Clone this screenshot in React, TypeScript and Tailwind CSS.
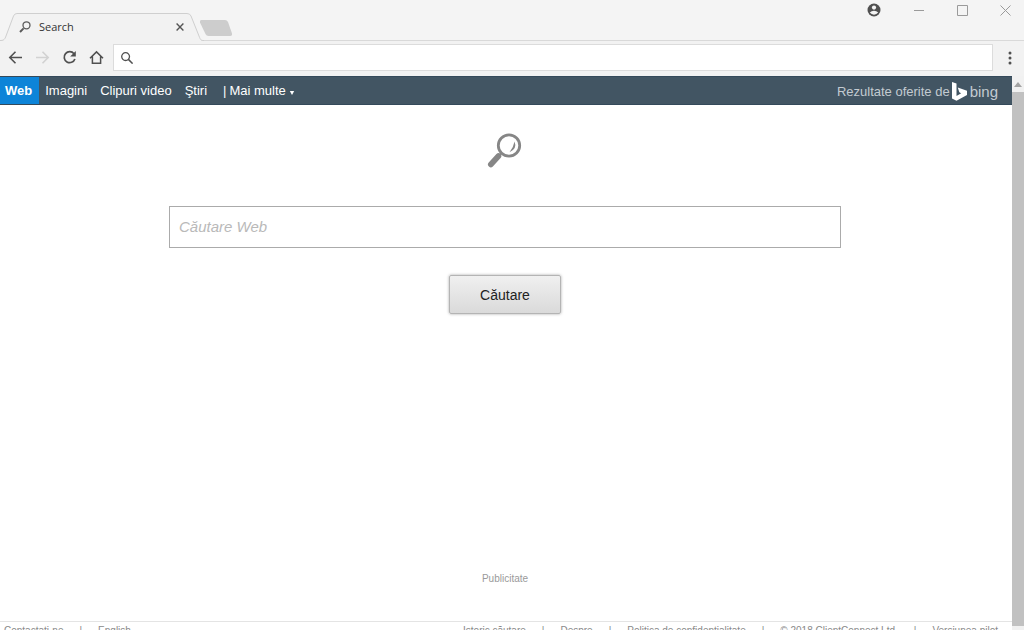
import { useState } from "react";

const NAV_LINKS = ["Imagini", "Clipuri video", "Ştiri"];

const FOOTER_LEFT = ["Contactaţi-ne", "English"];
const FOOTER_RIGHT = [
  "Istoric căutare",
  "Despre",
  "Politica de confidenţialitate",
  "© 2018 ClientConnect Ltd.",
  "Versiunea pilot",
];

function TitleBar() {
  return (
    <header className="flex h-10 shrink-0 items-end justify-between bg-[#f4f4f4]">
      <div className="flex items-end">
        <div className="relative z-10 -mb-px flex h-7 w-[204px] items-center pr-5 pl-[19px]">
          <svg
            viewBox="0 0 204 28"
            className="absolute inset-0 h-full w-full"
            aria-hidden="true"
          >
            <path d="M0 28C4 28 5 26 6 23L13.500 3Q14.500 .5 17 .5H187Q190 .5 191 3L199 23C200.500 27 201 28 204 28Z" fill="#f2f2f2" />
            <path
              d="M0 27.500C4 27.500 5 26 6 23L13.500 3Q14.500 .5 17 .5H187Q190 .5 191 3L199 23C200.500 27 201 27.500 204 27.500"
              fill="none"
              stroke="#cfcfcf"
            />
          </svg>
          <svg viewBox="0 0 12 12" className="relative h-3 w-3" fill="none" stroke="#5a5a5a" aria-hidden="true">
            <circle cx="7.500" cy="4.300" r="3.500" strokeWidth="1.300" />
            <path d="M4.600 7.400 1 11" strokeWidth="2" />
          </svg>
          <span className="relative ml-2 flex-1 font-['Open_Sans',sans-serif] text-[11px] text-[#333]">
            Search
          </span>
          <button type="button" aria-label="Close tab" className="relative">
            <svg viewBox="0 0 8 8" className="h-2 w-2" stroke="#555" strokeWidth="1.400" aria-hidden="true">
              <path d="M.6.6 7.400 7.400M7.400.6.6 7.400" />
            </svg>
          </button>
        </div>
        <button type="button" aria-label="New tab" className="-ml-1 pb-1">
          <svg viewBox="0 0 32 16" className="h-4 w-8" fill="#cdcdcd" aria-hidden="true">
            <path d="M1.500 0H25Q27 0 28 2L32 13.500Q32.500 16 30 16H8.500Q6.500 16 5.500 14L0 2.500Q-.5 0 1.500 0Z" />
          </svg>
        </button>
      </div>
      <div className="flex items-center self-start pr-[13px]">
        <button type="button" aria-label="Profile" className="mt-[3px] mr-[33px]">
          <svg viewBox="0 0 14 14" className="h-3.5 w-3.5" aria-hidden="true">
            <circle cx="7" cy="7" r="6.500" fill="#505050" />
            <circle cx="7" cy="4.600" r="2.100" fill="#f4f4f4" />
            <path d="M2.800 9.600Q4.500 7.700 7 7.700T11.200 9.600Q9.500 11.700 7 11.700T2.800 9.600Z" fill="#f4f4f4" />
          </svg>
        </button>
        <div className="mt-1 flex items-center gap-8 text-[#9a9a9a]">
          <button type="button" aria-label="Minimize">
            <svg viewBox="0 0 11 11" className="h-[11px] w-[11px]" stroke="currentColor" aria-hidden="true">
              <path d="M0 5.500H10" />
            </svg>
          </button>
          <button type="button" aria-label="Maximize">
            <svg viewBox="0 0 11 11" className="h-[11px] w-[11px]" stroke="currentColor" fill="none" aria-hidden="true">
              <path d="M.5.5H10.500V10.500H.5Z" />
            </svg>
          </button>
          <button type="button" aria-label="Close">
            <svg viewBox="0 0 11 11" className="h-[11px] w-[11px]" stroke="currentColor" aria-hidden="true">
              <path d="M.5.5 10.500 10.500M10.500.5.5 10.500" />
            </svg>
          </button>
        </div>
      </div>
    </header>
  );
}

function Toolbar() {
  const [address, setAddress] = useState("");

  return (
    <div className="flex h-9 shrink-0 items-center border-t border-[#d9d9d9] bg-[#f2f2f2] pr-3 pb-0.5 pl-2">
      <div className="flex items-center gap-3 text-[#505050]">
        <button type="button" aria-label="Back">
          <svg viewBox="0 0 15 15" className="h-[15px] w-[15px]" fill="none" stroke="currentColor" strokeWidth="1.600" aria-hidden="true">
            <path d="M14 7.500H2M7.500 1.800 1.800 7.500 7.500 13.200" />
          </svg>
        </button>
        <button type="button" aria-label="Forward" className="text-[#d2d2d2]">
          <svg viewBox="0 0 15 15" className="h-[15px] w-[15px]" fill="none" stroke="currentColor" strokeWidth="1.600" aria-hidden="true">
            <path d="M1 7.500H13M7.500 1.800 13.200 7.500 7.500 13.200" />
          </svg>
        </button>
        <button type="button" aria-label="Reload">
          <svg viewBox="0 0 15 15" className="h-[15px] w-[15px]" aria-hidden="true">
            <path
              d="M12 3.700A5.500 5.500 0 1 0 12.900 9"
              fill="none"
              stroke="currentColor"
              strokeWidth="1.700"
            />
            <path d="M13.800 1V6.600H8.200Z" fill="currentColor" />
          </svg>
        </button>
        <button type="button" aria-label="Home">
          <svg viewBox="0 0 15 15" className="h-[15px] w-[15px]" fill="none" stroke="currentColor" strokeWidth="1.500" aria-hidden="true">
            <path d="M1 8.300 7.500 1.900 14 8.300M3.400 6.500V13.200H11.600V6.500" />
          </svg>
        </button>
      </div>
      <label className="ml-[9px] flex h-[27px] flex-1 items-center border border-[#dcdcdc] bg-white pl-[7px]">
        <svg viewBox="0 0 12 12" className="h-3 w-3" fill="none" stroke="#505050" aria-hidden="true">
          <circle cx="4.600" cy="4.600" r="3.900" strokeWidth="1.300" />
          <path d="M7.400 7.400 11.600 11.600" strokeWidth="1.500" />
        </svg>
        <input
          type="text"
          aria-label="Address"
          value={address}
          onChange={(e) => setAddress(e.target.value)}
          className="ml-2 h-full min-w-0 flex-1 bg-transparent text-[13px] outline-none"
        />
      </label>
      <button type="button" aria-label="Menu" className="ml-[15px]">
        <svg viewBox="0 0 4 14" className="h-3.5 w-1" fill="#505050" aria-hidden="true">
          <circle cx="2" cy="2" r="1.500" />
          <circle cx="2" cy="7" r="1.500" />
          <circle cx="2" cy="12" r="1.500" />
        </svg>
      </button>
    </div>
  );
}

function NavBar() {
  return (
    <nav className="flex h-[29px] shrink-0 items-stretch justify-between border-y border-[#34495a] bg-[#425563] text-[13px] text-white">
      <div className="flex items-center">
        <a href="#web" className="mr-1.5 flex items-center self-stretch bg-[#0d84d8] pr-[7px] pl-[5px] font-bold">
          Web
        </a>
        <div className="flex items-center gap-[13px]">
          {NAV_LINKS.map((label) => (
            <a key={label} href="#nav">
              {label}
            </a>
          ))}
        </div>
        <span className="ml-4 pr-[3px]">|</span>
        <button type="button" className="flex items-center gap-[3px]">
          Mai multe
          <svg viewBox="0 0 6 4" className="mt-1 h-1 w-1.5" fill="currentColor" aria-hidden="true">
            <path d="M.8 0H5.200L3 4Z" />
          </svg>
        </button>
      </div>
      <div className="flex items-center pt-0.5 pr-3.5 text-[#c3cbd1]">
        <span>Rezultate oferite de</span>
        <a href="#bing" className="ml-0.5 flex items-center gap-[3px] text-[15px]">
          <svg viewBox="0 0 15 19" className="h-[19px] w-[15px]" fill="#fff" aria-hidden="true">
            <path d="M0 0 4.500 1.500V14L9.200 11.200 7.300 10.200 5.800 5.400 15 8.800V13L4.500 18.800 0 16.600Z" />
          </svg>
          <span className="pt-0.5">bing</span>
        </a>
      </div>
    </nav>
  );
}

function SearchPanel() {
  const [query, setQuery] = useState("");

  return (
    <main className="flex min-h-0 flex-1 flex-col items-center pt-7 pr-[18px] pl-4">
      <svg viewBox="0 0 36 36" className="h-9 w-9 shrink-0" aria-hidden="true">
        <circle cx="22" cy="12.500" r="10.700" fill="none" stroke="#868686" strokeWidth="2.800" />
        <path d="M27.500 8.500Q30.500 15.500 22.500 19.300 26.500 14.500 27.500 8.500Z" fill="#868686" />
        <path d="M11.500 23 3.800 31.500" stroke="#868686" strokeWidth="5.600" strokeLinecap="round" />
        <path d="M14.800 19.800 11.500 23.300" stroke="#868686" strokeWidth="2" />
      </svg>
      <form
        className="mt-[37px] flex w-full max-w-[672px] flex-col items-center"
        onSubmit={(e) => e.preventDefault()}
      >
        <input
          type="text"
          aria-label="Căutare Web"
          placeholder="Căutare Web"
          value={query}
          onChange={(e) => setQuery(e.target.value)}
          className="h-[42px] w-full border border-[#ababab] bg-white px-[9px] pb-0.5 text-[15px] text-[#222] outline-none placeholder:text-[#b9b9b9] placeholder:italic"
        />
        <button
          type="submit"
          className="mt-[27px] h-[39px] rounded-xs border border-[#b4b4b4] bg-linear-to-b from-[#f0f0f0] to-[#dadada] px-[30px] pt-0.5 text-[14px] text-[#222] shadow-[0_0_3px_rgba(0,0,0,0.35)]"
        >
          Căutare
        </button>
      </form>
      <p className="mt-auto mb-9 text-[10px] leading-3 text-[#9a9a9a]">Publicitate</p>
    </main>
  );
}

function FooterLinks({ items }: { items: string[] }) {
  return (
    <ul className="flex">
      {items.map((item, i) => (
        <li key={item} className="flex">
          {i > 0 && <span className="px-4">|</span>}
          {item.startsWith("©") ? <span>{item}</span> : <a href="#footer">{item}</a>}
        </li>
      ))}
    </ul>
  );
}

function Scrollbar() {
  return (
    <div className="flex w-3 shrink-0 flex-col bg-[#f1f1f1] pb-1" aria-hidden="true">
      <div className="flex h-4 items-center justify-center">
        <svg viewBox="0 0 8 5" className="h-[5px] w-2" fill="#a3a3a3">
          <path d="M4 0 8 5H0Z" />
        </svg>
      </div>
      <div className="flex-1 bg-[#c1c1c1]" />
    </div>
  );
}

export default function App() {
  return (
    <div className="flex h-screen flex-col overflow-hidden bg-white font-['Liberation_Sans',Arial,sans-serif]">
      <TitleBar />
      <Toolbar />
      <div className="flex min-h-0 flex-1">
        <div className="flex min-w-0 flex-1 flex-col">
          <NavBar />
          <SearchPanel />
          {/* the footer runs past the fold */}
          <footer className="-mb-2 flex shrink-0 justify-between border-t border-[#e4e4e4] pt-0.5 pr-3.5 pl-1 text-[10px] leading-3.5 whitespace-nowrap text-[#8a8a8a]">
            <FooterLinks items={FOOTER_LEFT} />
            <FooterLinks items={FOOTER_RIGHT} />
          </footer>
        </div>
        <Scrollbar />
      </div>
    </div>
  );
}
